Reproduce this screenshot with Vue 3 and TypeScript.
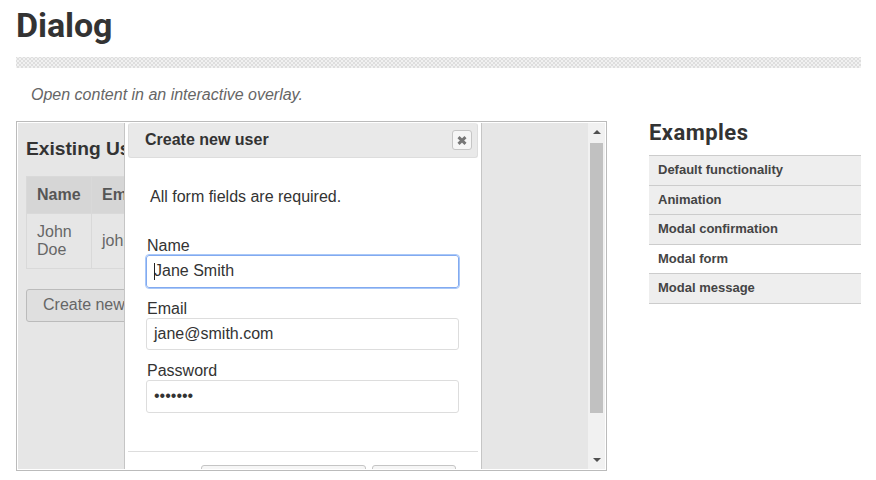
<script setup lang="ts">
import { ref } from 'vue'

interface Field { id: string; label: string; type: string; value: string }

const fields = ref<Field[]>([
  { id: 'name', label: 'Name', type: 'text', value: 'Jane Smith' },
  { id: 'email', label: 'Email', type: 'text', value: 'jane@smith.com' },
  { id: 'password', label: 'Password', type: 'password', value: '•••••••' },
])
const active = ref('Modal form')
const examples: string[] = ['Default functionality', 'Animation', 'Modal confirmation', 'Modal form', 'Modal message']
</script>

<template>
  <main class="page">
    <h1>Dialog</h1>
    <div class="rule"></div>
    <p class="desc">Open content in an interactive overlay.</p>
    <div class="columns">
      <section class="frame">
        <div class="demo">
          <h2>Existing Users:</h2>
          <table>
            <thead><tr><th>Name</th><th>Email</th></tr></thead>
            <tbody><tr><td>John<br>Doe</td><td>john</td></tr></tbody>
          </table>
          <button class="create">Create new</button>
          <div class="dialog">
            <header>
              <span>Create new user</span>
              <button class="close" aria-label="Close">
                <svg width="10" height="9" viewBox="0 0 10 9"><path d="M1.5 1.2L8.5 7.8M8.5 1.2L1.5 7.8" stroke="#777" stroke-width="3" /></svg>
              </button>
            </header>
            <div class="content">
              <p>All form fields are required.</p>
              <div v-for="f in fields" :key="f.id" class="field" :class="f.id">
                <label>{{ f.label }}</label>
                <div class="input"><i v-if="f.id === 'name'" class="caret"></i><span>{{ f.value }}</span></div>
              </div>
            </div>
            <footer>
              <div class="action wide"></div>
              <div class="action"></div>
            </footer>
          </div>
        </div>
        <div class="scrollbar">
          <svg class="arrow" width="8" height="4" viewBox="0 0 8 4"><path d="M0 4L4 0L8 4Z" fill="#505050" /></svg>
          <div class="thumb"></div>
          <svg class="arrow down" width="8" height="4" viewBox="0 0 8 4"><path d="M0 0L4 4L8 0Z" fill="#505050" /></svg>
        </div>
      </section>
      <aside>
        <h3>Examples</h3>
        <ul>
          <li v-for="e in examples" :key="e" :class="{ active: e === active }" @click="active = e">{{ e }}</li>
        </ul>
      </aside>
    </div>
  </main>
</template>

<style>
body { background: #fff; }
</style>

<style scoped>
* { box-sizing: border-box; }
h1, h2, h3, p, ul { margin: 0; padding: 0; }
.page { width: 876px; height: 480px; padding: 0 15px 0 16px; overflow: hidden; font: 16px/18px "Liberation Sans", Arial, sans-serif; color: #333; }
h1 { height: 57px; padding-top: 5px; font: 700 34px/40px Roboto, sans-serif; letter-spacing: -0.1px; }
.rule { height: 11px; background-color: #f1f1f1; background-image: radial-gradient(circle, #dedede 1px, transparent 1.4px), radial-gradient(circle, #dedede 1px, transparent 1.4px); background-size: 4px 4px; background-position: 0 0, 2px 2px; }
.desc { height: 53px; padding: 18px 15px 0; font-style: italic; color: #666; }
.columns { display: flex; gap: 42px; }
.frame { display: flex; width: 591px; height: 350px; padding: 1px; border: 1px solid #bbb; }
.demo { position: relative; flex: 1; overflow: hidden; background: #e6e6e6; padding: 15px 8px; }
h2 { height: 38px; font-size: 19.2px; line-height: 21px; }
table { width: 180px; border-collapse: collapse; table-layout: fixed; color: #666; }
th, td { border: 1px solid #d9d9d9; padding: 0 10px; text-align: left; }
th:first-child { width: 65px; }
th { height: 37px; background: #d6d6d6; color: #565656; }
td { height: 55px; }
.create { display: block; width: 155px; height: 33px; margin-top: 20px; padding: 0 0 1px 16px; text-align: left; border: 1px solid #bbb; border-radius: 3px; background: #dfdfdf; color: #666; font: inherit; }
.dialog { position: absolute; top: -2px; left: 106px; width: 358px; height: 390px; padding: 2px 3px; background: #fff; border: 1px solid #c5c5c5; }
header { display: flex; align-items: center; justify-content: space-between; height: 35px; padding: 0 5px 1px 16px; margin-top: -1px; border: 1px solid #ddd; border-top-color: #e9e9e9; border-radius: 3px; background: #e9e9e9; font-weight: 700; }
.close { display: flex; align-items: center; justify-content: center; width: 20px; height: 20px; margin-top: 0; padding: 0; border: 1px solid #c5c5c5; border-radius: 3px; background: #f6f6f6; }
.content { height: 293px; padding: 30px 19px 0 18px; }
.content p { padding-left: 4px; height: 49px; }
.field { height: 62px; }
.field.name { height: 63px; }
label { display: block; height: 18px; padding-left: 1px; }
.input { position: relative; display: flex; align-items: center; height: 33px; padding: 0 7px 1px; border: 1px solid #ddd; border-radius: 3px; background: #fff; }
.email .input { height: 32px; }
.name .input { outline: 1px solid #a9c8f8; border-color: #82aaf0; }
.caret { position: absolute; left: 7px; top: 7px; width: 1px; height: 17px; background: #222; }
footer { display: flex; gap: 6px; height: 56px; padding: 13px 0 0 73px; border-top: 1px solid #ddd; }
.action { width: 84px; height: 34px; border: 1px solid #c5c5c5; border-radius: 3px; background: #f6f6f6; }
.action.wide { width: 165px; }
.scrollbar { display: flex; flex-direction: column; align-items: center; width: 17px; padding: 7px 0; background: #f1f1f1; }
.thumb { width: 13px; height: 270px; margin-top: 9px; background: #c1c1c1; }
.down { margin-top: auto; }
aside { width: 212px; }
h3 { height: 34px; padding-top: 1px; font: 700 22px/22px Roboto, sans-serif; letter-spacing: 0.45px; }
ul { list-style: none; border-bottom: 1px solid #ccc; }
li { height: 29.6px; padding: 5px 9px; border-top: 1px solid #ccc; background: #eee; font: 700 13px/17px "Liberation Sans", Arial, sans-serif; color: #444; }
li.active { background: #fff; }
</style>
